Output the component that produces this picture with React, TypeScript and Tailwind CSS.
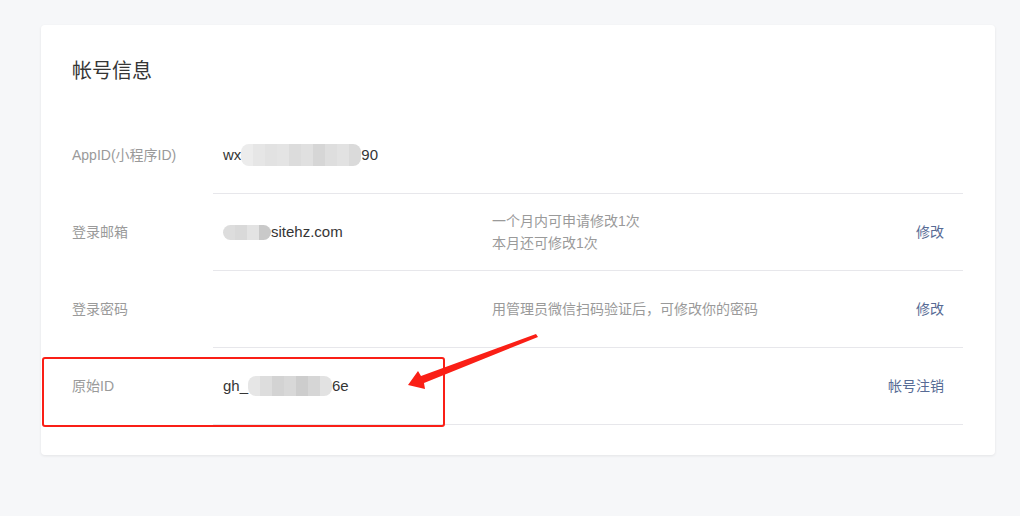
const shadesA = ['#ececec', '#e6e6e6', '#e2e2e2', '#e4e4e4', '#dcdcdc', '#e0e0e0', '#d6d6d6', '#dedede', '#e2e2e2', '#dadada'];
const shadesB = ['#dddddd', '#d9d9d9', '#e3e3e3', '#c9c9c9'];
const shadesC = ['#e6e6e6', '#dddddd', '#d3d3d3', '#d8d8d8', '#cdcdcd', '#d6d6d6', '#e2e2e2'];

const Mosaic = ({ shades, h }: { shades: string[]; h: string }) => (
  <span className={`inline-flex ${h} align-middle rounded-[8px] overflow-hidden`}>
    {shades.map((c, i) => (
      <span key={i} className="w-[12px] h-full" style={{ background: c }} />
    ))}
  </span>
);

type Row = {
  label: string;
  value: React.ReactNode;
  desc?: string[];
  action?: string;
};

const rows: Row[] = [
  {
    label: 'AppID(小程序ID)',
    value: (
      <span className="flex items-center">
        wx
        <Mosaic shades={shadesA} h="h-[22px]" />
        90
      </span>
    ),
  },
  {
    label: '登录邮箱',
    value: (
      <span className="flex items-center">
        <Mosaic shades={shadesB} h="h-[15px]" />
        sitehz.com
      </span>
    ),
    desc: ['一个月内可申请修改1次', '本月还可修改1次'],
    action: '修改',
  },
  {
    label: '登录密码',
    value: null,
    desc: ['用管理员微信扫码验证后，可修改你的密码'],
    action: '修改',
  },
  {
    label: '原始ID',
    value: (
      <span className="flex items-center">
        gh_
        <Mosaic shades={shadesC} h="h-[20px]" />
        6e
      </span>
    ),
    action: '帐号注销',
  },
];

export default function App() {
  return (
    <div
      className="relative min-h-[516px] bg-[#f6f7f9] pt-[25px] pl-[41px] pr-[25px]"
      style={{ fontFamily: '"Liberation Sans", "Noto Sans CJK SC", sans-serif' }}
    >
      <div className="w-[954px] h-[430px] bg-white rounded-[4px] shadow-[0_1px_3px_rgba(0,0,0,0.08)] pt-[32px] pl-[31px] pr-[32px]">
        <h2 className="text-[20px] leading-[28px] text-[#353535]">帐号信息</h2>
        <div className="mt-[32px]">
          {rows.map((r) => (
            <div key={r.label} className="flex h-[77px]">
              <div className="w-[141px] flex items-center text-[14px] text-[#9a9a9a]">{r.label}</div>
              <div className="flex-1 flex items-center border-b border-[#e7e7eb]">
                <div className="w-[279px] pl-[10px] text-[15px] text-[#353535]">{r.value}</div>
                <div className="flex-1 text-[14px] leading-[22px] text-[#9a9a9a]">
                  {r.desc?.map((d) => (
                    <div key={d}>{d}</div>
                  ))}
                </div>
                {r.action && <div className="pr-[19px] text-[14px] text-[#576b95]">{r.action}</div>}
              </div>
            </div>
          ))}
        </div>
      </div>

      <div className="absolute left-[42px] top-[357px] w-[403px] h-[70px] border-2 border-[#fa1f16] rounded-[3px]" />
      <svg className="absolute left-[400px] top-[328px]" width="145" height="65" viewBox="0 0 145 65">
        <path d="M136 6 L21 48 L18 43 L8 57 L25 61 L24 55 L138 9 Z" fill="#fa1f16" />
      </svg>
    </div>
  );
}
